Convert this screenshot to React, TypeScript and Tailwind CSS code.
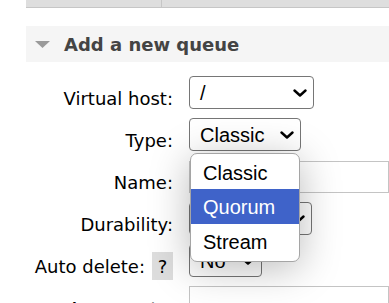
type Row = { label: string; help?: boolean };

function Chevron() {
  return (
    <svg width="14" height="8" viewBox="0 0 14 8" className="shrink-0">
      <polyline points="1.5,1.5 7,6.5 12.5,1.5" fill="none" stroke="#000" strokeWidth="2.4" strokeLinecap="round" strokeLinejoin="round" />
    </svg>
  );
}

function Select({ value, width }: { value: string; width: string }) {
  return (
    <div
      className={`flex h-[33px] items-center justify-between rounded-[4px] border border-[#767676] bg-white pl-[10px] pr-[6px] font-['Liberation_Sans',sans-serif] text-[20px] text-black ${width}`}
    >
      <span>{value}</span>
      <Chevron />
    </div>
  );
}

export default function App() {
  const rows: Row[] = [
    { label: "Virtual host:" },
    { label: "Type:" },
    { label: "Name:" },
    { label: "Durability:" },
    { label: "Auto delete:", help: true },
    { label: "Arguments:" },
  ];

  return (
    <div className="relative h-[303px] w-[389px] overflow-hidden bg-white font-['DejaVu_Sans',sans-serif] text-black">
      {/* table above */}
      <div className="ml-[26px] flex h-[8px] border-b border-[#c6c6c6] bg-[#dedede]">
        <div className="w-[136px] border-r border-[#c6c6c6]" />
      </div>

      {/* section heading */}
      <div className="ml-[26px] mt-[18px] flex h-[36px] items-center gap-[14px] bg-[#f5f5f5] pl-[9px]">
        <svg width="15" height="7" viewBox="0 0 15 7">
          <polygon points="0,0 15,0 7.5,7" fill="#9a9a9a" />
        </svg>
        <h2 className="text-[18px] font-bold text-[#444]">Add a new queue</h2>
      </div>

      {/* form */}
      <div className="mt-[14px] grid grid-cols-[173px_1fr] gap-x-[16px] gap-y-[9px]">
        {rows.map((r, i) => (
          <div key={r.label} className="contents">
            <div className="flex h-[33px] items-center justify-end gap-[7px] pt-[11px] text-[18px]">
              <span>{r.label}</span>
              {r.help && (
                <span className="flex h-[28px] w-[21px] shrink-0 items-center justify-center bg-[#dddddd]">?</span>
              )}
            </div>
            <div className="flex h-[33px] items-center">
              {i === 0 && <Select value="/" width="w-[125px]" />}
              {i === 1 && <Select value="Classic" width="w-[112px]" />}
              {i === 2 && <div className="h-[32px] w-full border border-[#c4c4c4]" />}
              {i === 3 && <Select value="Classic" width="w-[123px]" />}
              {i === 4 && <Select value="No" width="w-[73px]" />}
              {i === 5 && <div className="h-[33px] w-full self-end border border-[#c4c4c4]" />}
            </div>
          </div>
        ))}
      </div>

      {/* open select list */}
      <div className="absolute left-[190px] top-[153px] w-[110px] overflow-hidden rounded-[7px] border border-[#a5a5a5] bg-white py-[2px] font-['Liberation_Sans',sans-serif] text-[20px] shadow-[0_6px_40px_rgba(0,0,0,0.28)]">
        <div className="flex h-[33px] items-center pl-[12px]">Classic</div>
        <div className="flex h-[35px] items-center bg-[#3f63c9] pl-[12px] text-white">Quorum</div>
        <div className="flex h-[35px] items-center pl-[12px]">Stream</div>
      </div>
    </div>
  );
}
